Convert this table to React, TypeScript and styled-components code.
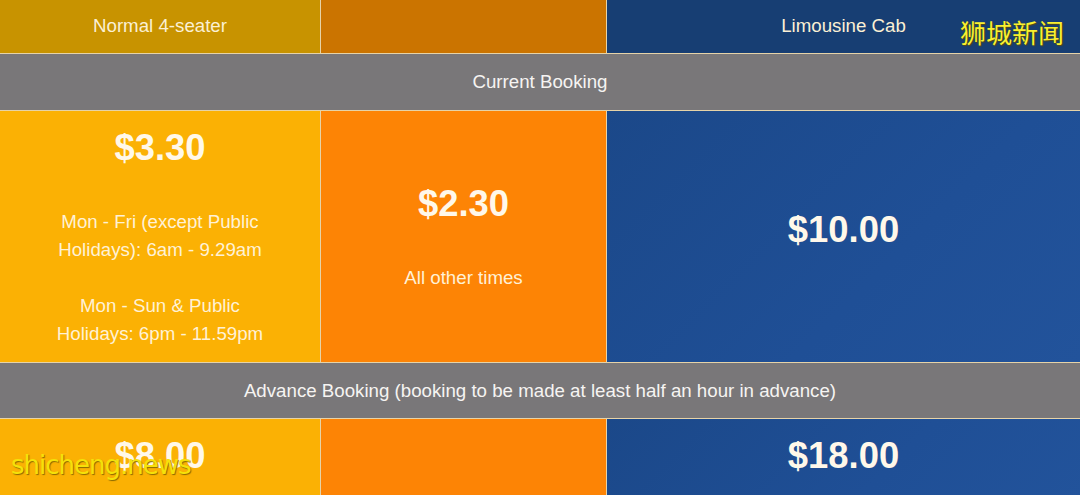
import styled, { createGlobalStyle } from "styled-components";

const GlobalStyle = createGlobalStyle`
  html, body {
    margin: 0;
    padding: 0;
    background: #797779;
  }
  body {
    font-family: "Liberation Sans", Arial, sans-serif;
    width: 1080px;
    height: 495px;
    overflow: hidden;
  }
`;

type Tone = "gold" | "orange" | "blue";

const headBg: Record<Tone, string> = {
  gold: "#c89300",
  orange: "#cb7400",
  blue: "#173e73",
};

const cellBg: Record<Tone, string> = {
  gold: "#fbb104",
  orange: "#fd8405",
  blue: "linear-gradient(135deg, #1b4889 0%, #1f4f96 60%, #22539b 100%)",
};

export default function App() {
  return (
    <>
      <GlobalStyle />
      <Page>
        <Table>
          <Head tone="gold">Normal 4-seater</Head>
          <Head tone="orange" />
          <Head tone="blue">Limousine Cab</Head>

          <Band>Current Booking</Band>

          <Cell tone="gold">
            <Price>$3.30</Price>
            <Note>
              Mon - Fri (except Public
              <br />
              Holidays): 6am - 9.29am
              <br />
              <br />
              Mon - Sun &amp; Public
              <br />
              Holidays: 6pm - 11.59pm
            </Note>
          </Cell>
          <Cell tone="orange">
            <Price>$2.30</Price>
            <Note>All other times</Note>
          </Cell>
          <Cell tone="blue">
            <Price $shift={-16}>$10.00</Price>
          </Cell>

          <Band>Advance Booking (booking to be made at least half an hour in advance)</Band>

          <Bottom tone="gold">
            <Price>$8.00</Price>
          </Bottom>
          <Bottom tone="orange" />
          <Bottom tone="blue">
            <Price>$18.00</Price>
          </Bottom>
        </Table>
        <MarkCn>狮城新闻</MarkCn>
        <MarkEn>shicheng.news</MarkEn>
      </Page>
    </>
  );
}

const Page = styled.div`
  position: relative;
  width: 1080px;
  height: 495px;
  overflow: hidden;
`;

const Table = styled.div`
  display: grid;
  grid-template-columns: 320px 285px 1fr;
  grid-template-rows: 53px 56px 251px 55px 80px;
  gap: 1px;
  background: #e6d3a8;
  height: 497px;
`;

const Head = styled.div<{ tone: Tone }>`
  display: flex;
  align-items: center;
  justify-content: center;
  background: ${(p) => headBg[p.tone]};
  color: #fbf0d4;
  font-size: 18.7px;
  padding-bottom: 2px;
`;

const Band = styled.div`
  grid-column: 1 / -1;
  display: flex;
  align-items: center;
  justify-content: center;
  background: #797779;
  color: #f6f4f2;
  font-size: 18.7px;
`;

const Cell = styled.div<{ tone: Tone }>`
  display: flex;
  flex-direction: column;
  align-items: center;
  justify-content: center;
  background: ${(p) => cellBg[p.tone]};
  color: #fff6e2;
  text-align: center;
  padding-top: 2px;
`;

const Bottom = styled(Cell)`
  justify-content: flex-start;
  padding: 17px 0 0;
`;

const Price = styled.div<{ $shift?: number }>`
  font-size: 36.4px;
  font-weight: bold;
  line-height: 40px;
  color: #fff8ea;
  margin-top: ${(p) => p.$shift ?? 0}px;
`;

const Note = styled.div`
  margin-top: 40px;
  font-size: 18.7px;
  line-height: 28px;
  color: #fff1d6;
`;

const MarkCn = styled.div`
  position: absolute;
  top: 13px;
  left: 960px;
  font-family: "Noto Sans CJK SC", sans-serif;
  font-size: 26px;
  color: #f8f030;
  text-shadow: 1px 1px 1px #5a4a10;
`;

const MarkEn = styled.div`
  position: absolute;
  top: 450px;
  left: 11px;
  font-family: "DejaVu Sans", sans-serif;
  font-size: 26px;
  letter-spacing: -1px;
  color: #f5e10a;
  text-shadow: 1px 1px 1px #8a6a00;
`;
